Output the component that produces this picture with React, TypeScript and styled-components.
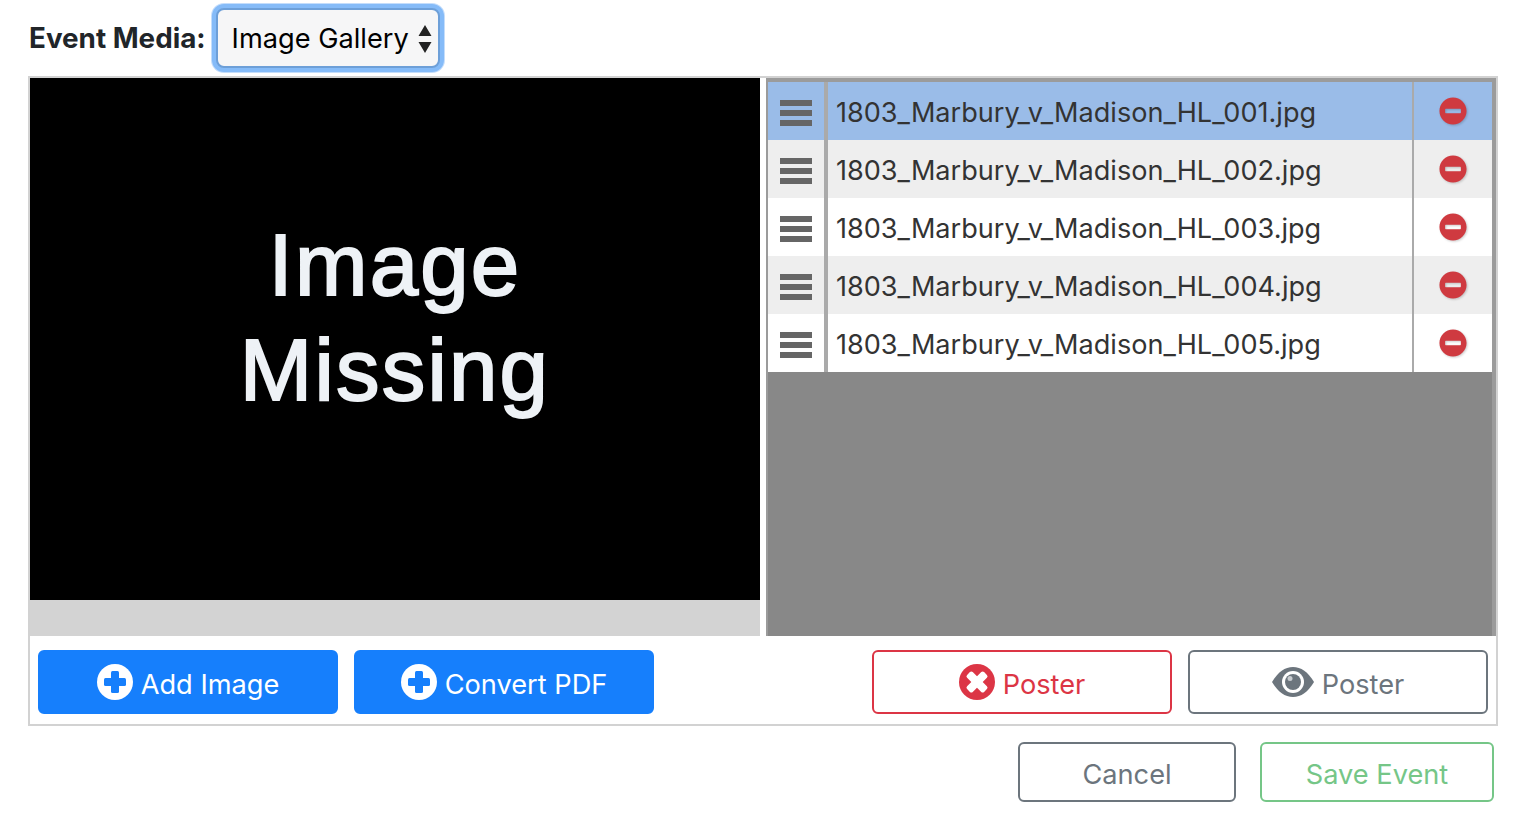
import React from "react";
import styled, { createGlobalStyle } from "styled-components";
import { FaMinusCircle } from "react-icons/fa";

const GlobalStyle = createGlobalStyle`
  html, body {
    margin: 0;
    background: #fff;
    font-family: Inter, "Liberation Sans", sans-serif;
    color: #212529;
  }
`;

const Page = styled.div`
  width: 1470px;
  padding: 2px 20px 0 28px;
`;

const MediaRow = styled.div`
  display: flex;
  align-items: center;
  height: 72px;
`;

const FieldLabel = styled.label`
  font-size: 27.8px;
  font-weight: 700;
  margin-right: 10px;
  margin-left: 1px;
`;

const SelectWrap = styled.div`
  position: relative;
  width: 224px;
  height: 60px;
  box-sizing: border-box;
  border: 2px solid #6d9fd8;
  border-radius: 8px;
  background: #f6f6f7;
  box-shadow: 0 0 0 4px #85bbf8, 0 0 0 5px #c4ddfb;
`;

const MediaSelect = styled.select`
  appearance: none;
  width: 100%;
  height: 100%;
  border: 0;
  outline: 0;
  background: transparent;
  font: 400 27.2px Inter, "Liberation Sans", sans-serif;
  color: #000;
  padding: 0 0 0 14px;
`;

const SelectArrows = styled.svg`
  position: absolute;
  top: 15px;
  right: 6px;
  width: 14px;
  height: 28px;
`;

const Frame = styled.div`
  width: 1470px;
  box-sizing: border-box;
  border: 2px solid #d2d2d2;
  margin-top: 2px;
`;

const Panels = styled.div`
  display: flex;
  gap: 6px;
  height: 558px;
`;

const Viewer = styled.div`
  width: 730px;
  display: flex;
  flex-direction: column;
  background: #d3d3d3;
`;

const Missing = styled.div`
  height: 522px;
  box-sizing: border-box;
  padding-bottom: 44px;
  background: #000;
  color: #eef2f6;
  display: flex;
  align-items: center;
  justify-content: center;
  text-align: center;
  font: 400 87px/105px "Liberation Sans", Arial, sans-serif;
  letter-spacing: 2.2px;
  -webkit-text-stroke: 2px #eef2f6;
  filter: blur(0.6px);
`;

const ListPanel = styled.div`
  flex: 1;
  box-sizing: border-box;
  background: #888;
  border-style: solid;
  border-color: #9b9b9b;
  border-width: 4px 4px 0 2px;
`;

const Row = styled.div<{ $bg: string }>`
  display: flex;
  height: 58px;
  background: ${(p) => p.$bg};
`;

const Handle = styled.div`
  width: 56px;
  flex: none;
  display: flex;
  align-items: center;
  justify-content: center;
`;

const HandleBars = styled.svg`
  width: 32px;
  height: 26px;
  margin-top: 4px;
  fill: #666;
`;

const FileName = styled.div`
  flex: 1;
  display: flex;
  align-items: center;
  padding: 2px 0 0 8px;
  border-left: 4px solid #aaa;
  border-right: 2px solid #aaa;
  font-size: 27.1px;
  color: #333;
`;

const Remove = styled.div`
  width: 78px;
  flex: none;
  display: flex;
  align-items: center;
  justify-content: center;
  color: #cf3a40;
  font-size: 28px;
  svg {
    filter: drop-shadow(1px 1px 1px rgba(0, 0, 0, 0.2));
  }
`;

const Toolbar = styled.div`
  display: flex;
  justify-content: space-between;
  padding: 14px 8px 10px;
`;

const ButtonGroup = styled.div`
  display: flex;
  gap: 16px;
`;

const Button = styled.button<{ $color: string; $solid?: boolean; $w?: number; $h?: number }>`
  width: ${(p) => p.$w ?? 300}px;
  height: ${(p) => p.$h ?? 64}px;
  box-sizing: border-box;
  display: flex;
  align-items: center;
  justify-content: center;
  gap: 8px;
  border: 2px solid ${(p) => p.$color};
  border-radius: 6px;
  background: ${(p) => (p.$solid ? p.$color : "#fff")};
  color: ${(p) => (p.$solid ? "#fff" : p.$color)};
  font: 400 27.2px Inter, "Liberation Sans", sans-serif;
  padding: 0;
`;

const ButtonText = styled.span`
  margin-top: 4px;
`;

const CircleIcon = styled.svg`
  width: 36px;
  height: 36px;
  flex: none;
`;

const EyeIcon = styled.svg`
  width: 42px;
  height: 30px;
  flex: none;
`;

const Footer = styled.div`
  display: flex;
  justify-content: flex-end;
  gap: 24px;
  padding: 16px 4px 0 0;
`;

const files = [
  "1803_Marbury_v_Madison_HL_001.jpg",
  "1803_Marbury_v_Madison_HL_002.jpg",
  "1803_Marbury_v_Madison_HL_003.jpg",
  "1803_Marbury_v_Madison_HL_004.jpg",
  "1803_Marbury_v_Madison_HL_005.jpg",
];

const rowColors = ["#9abce8", "#eeeeee", "#ffffff", "#eeeeee", "#ffffff"];

function PlusIcon() {
  return (
    <CircleIcon viewBox="0 0 36 36">
      <circle cx="18" cy="18" r="18" fill="#fff" />
      <rect x="14" y="7" width="8" height="22" rx="1.5" fill="#167ffc" />
      <rect x="7" y="14" width="22" height="8" rx="1.5" fill="#167ffc" />
    </CircleIcon>
  );
}

function CrossIcon() {
  return (
    <CircleIcon viewBox="0 0 36 36">
      <circle cx="18" cy="18" r="18" fill="#dc3545" />
      <g transform="rotate(45 18 18)">
        <rect x="14" y="6" width="8" height="24" rx="2" fill="#fff" />
        <rect x="6" y="14" width="24" height="8" rx="2" fill="#fff" />
      </g>
    </CircleIcon>
  );
}

function Eye() {
  return (
    <EyeIcon viewBox="0 0 42 30">
      <path d="M0 15 C6 5 13 0 21 0 C29 0 36 5 42 15 C36 25 29 30 21 30 C13 30 6 25 0 15 Z" fill="#6c757d" />
      <circle cx="21" cy="15" r="11" fill="#fff" />
      <circle cx="21" cy="15" r="8" fill="#6c757d" />
      <circle cx="18" cy="11.5" r="2.5" fill="#c8ccd0" />
    </EyeIcon>
  );
}

export default function App() {
  return (
    <Page>
      <GlobalStyle />
      <MediaRow>
        <FieldLabel>Event Media:</FieldLabel>
        <SelectWrap>
          <MediaSelect defaultValue="gallery">
            <option value="gallery">Image Gallery</option>
          </MediaSelect>
          <SelectArrows viewBox="0 0 14 28">
            <path d="M7 0 L13.5 11 H0.5 Z M7 28 L0.5 17 H13.5 Z" fill="#222" />
          </SelectArrows>
        </SelectWrap>
      </MediaRow>
      <Frame>
        <Panels>
          <Viewer>
            <Missing>
              Image
              <br />
              Missing
            </Missing>
          </Viewer>
          <ListPanel>
            {files.map((name, i) => (
              <Row key={name} $bg={rowColors[i]}>
                <Handle>
                  <HandleBars viewBox="0 0 32 26">
                    <rect y="0" width="32" height="6" />
                    <rect y="10" width="32" height="6" />
                    <rect y="20" width="32" height="6" />
                  </HandleBars>
                </Handle>
                <FileName>{name}</FileName>
                <Remove>
                  <FaMinusCircle />
                </Remove>
              </Row>
            ))}
          </ListPanel>
        </Panels>
        <Toolbar>
          <ButtonGroup>
            <Button $color="#167ffc" $solid>
              <PlusIcon />
              <ButtonText>Add Image</ButtonText>
            </Button>
            <Button $color="#167ffc" $solid>
              <PlusIcon />
              <ButtonText>Convert PDF</ButtonText>
            </Button>
          </ButtonGroup>
          <ButtonGroup>
            <Button $color="#dc3545">
              <CrossIcon />
              <ButtonText>Poster</ButtonText>
            </Button>
            <Button $color="#6c757d">
              <Eye />
              <ButtonText>Poster</ButtonText>
            </Button>
          </ButtonGroup>
        </Toolbar>
      </Frame>
      <Footer>
        <Button $color="#6c757d" $w={218} $h={60}>
          <ButtonText>Cancel</ButtonText>
        </Button>
        <Button $color="#75c687" $w={234} $h={60}>
          <ButtonText>Save Event</ButtonText>
        </Button>
      </Footer>
    </Page>
  );
}
